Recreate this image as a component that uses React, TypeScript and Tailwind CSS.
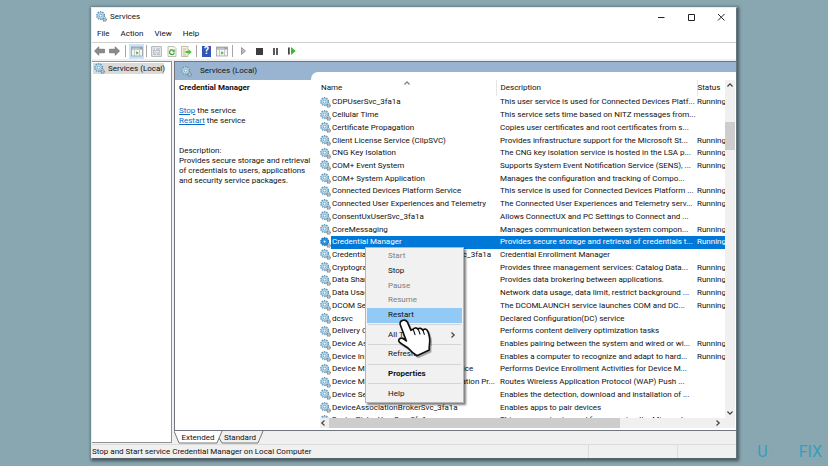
import type { ReactNode } from "react";

type Service = {
  name: string;
  description: string;
  running?: boolean;
  selected?: boolean;
};

const services: Service[] = [
  { name: "CDPUserSvc_3fa1a", description: "This user service is used for Connected Devices Platf...", running: true },
  { name: "Cellular Time", description: "This service sets time based on NITZ messages from..." },
  { name: "Certificate Propagation", description: "Copies user certificates and root certificates from s..." },
  { name: "Client License Service (ClipSVC)", description: "Provides infrastructure support for the Microsoft St...", running: true },
  { name: "CNG Key Isolation", description: "The CNG key isolation service is hosted in the LSA p...", running: true },
  { name: "COM+ Event System", description: "Supports System Event Notification Service (SENS), ...", running: true },
  { name: "COM+ System Application", description: "Manages the configuration and tracking of Compo..." },
  { name: "Connected Devices Platform Service", description: "This service is used for Connected Devices Platform ...", running: true },
  { name: "Connected User Experiences and Telemetry", description: "The Connected User Experiences and Telemetry serv...", running: true },
  { name: "ConsentUxUserSvc_3fa1a", description: "Allows ConnectUX and PC Settings to Connect and ..." },
  { name: "CoreMessaging", description: "Manages communication between system compon...", running: true },
  { name: "Credential Manager", description: "Provides secure storage and retrieval of credentials t...", running: true, selected: true },
  { name: "CredentialEnrollmentManagerUserSvc_3fa1a", description: "Credential Enrollment Manager" },
  { name: "Cryptographic Services", description: "Provides three management services: Catalog Data...", running: true },
  { name: "Data Sharing Service", description: "Provides data brokering between applications.", running: true },
  { name: "Data Usage", description: "Network data usage, data limit, restrict background ...", running: true },
  { name: "DCOM Server Process Launcher", description: "The DCOMLAUNCH service launches COM and DC...", running: true },
  { name: "dcsvc", description: "Declared Configuration(DC) service" },
  { name: "Delivery Optimization", description: "Performs content delivery optimization tasks" },
  { name: "Device Association Service", description: "Enables pairing between the system and wired or wi...", running: true },
  { name: "Device Install Service", description: "Enables a computer to recognize and adapt to hard...", running: true },
  { name: "Device Management Enrollment Service", description: "Performs Device Enrollment Activities for Device M..." },
  { name: "Device Management Wireless Application Pr...", description: "Routes Wireless Application Protocol (WAP) Push ..." },
  { name: "Device Setup Manager", description: "Enables the detection, download and installation of ..." },
  { name: "DeviceAssociationBrokerSvc_3fa1a", description: "Enables apps to pair devices" },
  { name: "DevicePickerUserSvc_3fa1a", description: "This user service is used for managing the Miracast..." },
];

type MenuEntry = { label: string; disabled?: boolean; active?: boolean; bold?: boolean; submenu?: boolean } | null;

const menuEntries: MenuEntry[] = [
  { label: "Start", disabled: true },
  { label: "Stop" },
  { label: "Pause", disabled: true },
  { label: "Resume", disabled: true },
  { label: "Restart", active: true },
  null,
  { label: "All Tasks", submenu: true },
  null,
  { label: "Refresh" },
  null,
  { label: "Properties", bold: true },
  null,
  { label: "Help" },
];

function GearIcon({ className = "h-[11px] w-[11px]", selected = false }: { className?: string; selected?: boolean }) {
  const stroke = selected ? "#1673bd" : "#5f97b8";
  const fill = selected ? "#3c9be6" : "#cfe7f4";
  return (
    <svg viewBox="0 0 20 20" className={`shrink-0 ${className}`} aria-hidden="true">
      <circle cx="15.6" cy="15.4" r="3.2" fill="#b9c5cd" stroke="#6d808d" strokeWidth="2" strokeDasharray="1.8 1" />
      <circle cx="8.4" cy="8.4" r="7" fill={fill} stroke={stroke} strokeWidth="2.4" strokeDasharray="2.6 1.8" />
      <circle cx="8.4" cy="8.4" r="5.6" fill={fill} stroke={stroke} strokeWidth="1" />
      <circle cx="8.4" cy="8.4" r="2.6" fill="#fff" stroke={stroke} strokeWidth="1.5" />
    </svg>
  );
}

function ToolButton({ label, active, children }: { label: string; active?: boolean; children: ReactNode }) {
  return (
    <button
      type="button"
      aria-label={label}
      className={`flex h-[15px] w-[15px] items-center justify-center ${active ? "bg-[#cce4f7]" : ""}`}
    >
      {children}
    </button>
  );
}

function Separator({ className }: { className: string }) {
  return (
    <div className={`flex h-3 justify-center ${className}`}>
      <div className="w-px bg-[#a6a6a6]" />
    </div>
  );
}

function ArrowIcon({ flip }: { flip?: boolean }) {
  return (
    <svg viewBox="0 0 22 20" className={`h-[10px] w-[11px] ${flip ? "-scale-x-100" : ""}`}>
      <path d="M1 10 9.5 1.5V6.5H21V13.5H9.5V18.5Z" fill="#8b8b8b" stroke="#6c6c6c" strokeWidth="1.4" />
    </svg>
  );
}

function PaneIcon() {
  return (
    <svg viewBox="0 0 24 22" className="h-[11px] w-3">
      <rect x="1" y="2" width="22" height="18" fill="#f4f4f4" stroke="#8e959b" strokeWidth="1.4" />
      <path d="M1 2H23V7H1Z" fill="#9aa2a9" />
      <path d="M3 4.5H17" stroke="#fff" strokeWidth="1" />
      <path d="M7 7V20M17 7V20" stroke="#a5acb2" strokeWidth="1.2" />
      <path d="M10.5 10.5 15.5 13.8 10.5 17Z" fill="#39a935" />
    </svg>
  );
}

function Toolbar() {
  return (
    <div className="flex h-[17px] shrink-0 items-center border-t border-[#cfcfcf] bg-white">
      <ToolButton label="Back"><ArrowIcon /></ToolButton>
      <ToolButton label="Forward"><ArrowIcon flip /></ToolButton>
      <Separator className="w-[7px]" />
      <ToolButton label="Show console tree" active><PaneIcon /></ToolButton>
      <Separator className="w-[5px]" />
      <ToolButton label="Properties">
        <svg viewBox="0 0 22 22" className="h-[11px] w-[11px]">
          <rect x="1.5" y="1.5" width="19" height="19" fill="#f3f3f3" stroke="#949ba1" strokeWidth="1.6" />
          <path d="M4.5 6H8M10 6H18M4.5 16.5H10M12 16.5H18" stroke="#8e969c" strokeWidth="1.6" />
          <rect x="5" y="8.5" width="12" height="5.5" fill="#dfe5e9" stroke="#9aa2a9" />
        </svg>
      </ToolButton>
      <ToolButton label="Refresh">
        <svg viewBox="0 0 20 22" className="h-[11px] w-[10px]">
          <path d="M2 1H14L18 5V21H2Z" fill="#f7f7ef" stroke="#a3a795" strokeWidth="1.4" />
          <path d="M14.5 13A4.7 4.7 0 1 1 12.5 8.5" fill="none" stroke="#35a234" strokeWidth="2.4" />
          <path d="M10.5 11.5 16 11.5 14.5 6Z" fill="#35a234" />
        </svg>
      </ToolButton>
      <ToolButton label="Export list">
        <svg viewBox="0 0 22 22" className="h-[11px] w-[11px]">
          <path d="M1 1H14V21H1Z" fill="#f8f6df" stroke="#a9a68c" strokeWidth="1.4" />
          <path d="M3.5 6H11M3.5 10H9M3.5 14H9M3.5 18H11" stroke="#8f9277" strokeWidth="1.2" />
          <path d="M9 10H15V6.5L21.5 12 15 17.5V14H9Z" fill="#4cc23a" />
        </svg>
      </ToolButton>
      <Separator className="w-[5px]" />
      <ToolButton label="Help">
        <span className="flex h-[11px] w-[9px] items-center justify-center bg-[#3355b5] text-[10px] leading-none font-bold text-white">
          ?
        </span>
      </ToolButton>
      <ToolButton label="Show action pane"><PaneIcon /></ToolButton>
      <Separator className="w-[7px]" />
      <div className="flex gap-px">
        <ToolButton label="Start service">
          <svg viewBox="0 0 10 16" className="h-2 w-[5px]">
            <path d="M1 1 9 8 1 15Z" fill="#b9bcbf" stroke="#85898c" strokeWidth="1.6" />
          </svg>
        </ToolButton>
        <ToolButton label="Stop service"><span className="h-[7px] w-[7px] bg-[#3c3c3c]" /></ToolButton>
        <ToolButton label="Pause service"><span className="h-[7px] w-[5px] border-x-2 border-[#5a5a5a]" /></ToolButton>
        <ToolButton label="Restart service">
          <svg viewBox="0 0 16 16" className="h-2 w-2">
            <path d="M0 1H3.5V15H0Z" fill="#454545" />
            <path d="M6 0 15.5 8 6 16Z" fill="#3dbb2e" />
          </svg>
        </ToolButton>
      </div>
    </div>
  );
}

function Chevron({ className = "" }: { className?: string }) {
  return (
    <svg viewBox="0 0 10 10" className={`h-[6px] w-[6px] shrink-0 ${className}`} aria-hidden="true">
      <path d="M2.5 0.8 7 5 2.5 9.2" fill="none" stroke="#444" strokeWidth="2" />
    </svg>
  );
}

const handPath =
  "M20 7C13 9 11 15 13 21L31 69C25 62 16 57 10 63C6 68 9 73 15 76L36 90C44 99 53 107 63 113L100 96C98 85 103 75 101 61C99 49 97 37 90 34C86 32 82 34 81 37C77 30 69 29 66 34C62 28 54 29 51 34L45 37L34 12C31 7 26 5 20 7Z";

function HandCursor({ className }: { className: string }) {
  return (
    <svg viewBox="0 0 111 126" className={className} aria-hidden="true">
      <path d={handPath} transform="translate(4 5)" fill="#000" stroke="#000" strokeWidth="5" opacity="0.3" />
      <path d={handPath} fill="#fff" stroke="#111" strokeWidth="5" strokeLinejoin="round" />
      <path d="M52 35 57 50M67 34 72 48M81 37 85 49" stroke="#111" strokeWidth="3.4" strokeLinecap="round" />
    </svg>
  );
}

function ContextMenu() {
  return (
    <div
      role="menu"
      className="absolute top-[167px] left-[45px] flex h-[156px] w-[99px] flex-col border border-[#b5b5b5] bg-[#f1f1f1] p-px shadow-[2px_2px_2px_rgba(0,0,0,0.5)]"
    >
      {menuEntries.map((entry, i) =>
        entry ? (
          <button
            key={entry.label}
            type="button"
            role="menuitem"
            disabled={entry.disabled}
            className={`flex min-h-0 grow-[15] basis-0 items-center justify-between pr-[6px] pl-[21px] text-left leading-none ${
              entry.active ? "bg-[#91c9f7]" : ""
            } ${entry.disabled ? "text-[#7d7d7d]" : ""} ${entry.bold ? "font-bold" : ""}`}
          >
            {entry.label}
            {entry.submenu && <Chevron />}
          </button>
        ) : (
          <div key={i} role="separator" className="flex min-h-0 grow-[5] basis-0 items-center px-px">
            <div className="h-px w-full bg-[#d4d4d4]" />
          </div>
        ),
      )}
    </div>
  );
}

function ServiceTable() {
  return (
    <table className="h-[347px] w-full table-fixed border-collapse text-left leading-3 whitespace-nowrap">
      <colgroup>
        <col className="w-[11px]" />
        <col className="w-[165px]" />
        <col />
        <col className="w-7" />
      </colgroup>
      <thead>
        <tr className="h-4">
          <th colSpan={2} className="relative border-r border-[#e5e5e5] p-0 pl-px font-normal">
            Name
            <Chevron className="absolute top-0 left-[84px] -rotate-90 opacity-70" />
          </th>
          <th className="border-r border-[#e5e5e5] p-0 pl-1 font-normal">Description</th>
          <th className="p-0 font-normal">Status</th>
        </tr>
      </thead>
      <tbody>
        {services.map((s) => {
          const cell = s.selected ? "overflow-hidden bg-[#0078d7] p-0 text-white" : "overflow-hidden p-0";
          return (
            <tr key={s.name}>
              <td className="p-0">
                <GearIcon selected={s.selected} />
              </td>
              <td className={`${cell} pl-px`}>{s.name}</td>
              <td className={`${cell} pl-1`}>{s.description}</td>
              <td className={cell}>{s.running ? "Running" : ""}</td>
            </tr>
          );
        })}
      </tbody>
    </table>
  );
}

function ServiceList() {
  return (
    <div className="mt-[10px] flex min-w-0 flex-1 rounded-tl-[7px] bg-white pt-2 pr-px pb-[2px] pl-[9px]">
      <div className="relative flex min-w-0 flex-1 flex-col">
        <div className="flex min-h-0 flex-1">
          <div className="min-w-0 flex-1 overflow-hidden">
            <ServiceTable />
          </div>
          <div className="flex w-[10px] shrink-0 flex-col items-center bg-[#f0f0f0] py-[2px]">
            <Chevron className="-rotate-90" />
            <div className="flex w-full flex-1 flex-col pt-[34px]">
              <div className="h-7 bg-[#cdcdcd]" />
            </div>
            <Chevron className="rotate-90" />
          </div>
        </div>
        <div className="flex h-[10px] shrink-0 items-center bg-[#f0f0f0] pr-[14px]">
          <Chevron className="mr-[3px] rotate-180" />
          <div className="h-full flex-1">
            <div className="h-full w-[77%] bg-[#cdcdcd]" />
          </div>
          <Chevron className="ml-2" />
        </div>
        <ContextMenu />
        <HandCursor className="absolute top-[238px] left-[76px] h-[42px] w-[37px]" />
      </div>
    </div>
  );
}

function DetailPane() {
  return (
    <div className="flex w-[136px] shrink-0 flex-col">
      <div className="flex h-[18px] items-center gap-2 pl-[6px]">
        <GearIcon />
        <span>Services (Local)</span>
      </div>
      <div className="flex flex-1 flex-col bg-white pt-[3px] pl-1 leading-[10px]">
        <h1 className="font-bold">Credential Manager</h1>
        <p className="mt-[13px]">
          <a href="#stop" className="text-[#0a6cc4] underline">Stop</a> the service
          <br />
          <a href="#restart" className="text-[#0a6cc4] underline">Restart</a> the service
        </p>
        <p className="mt-5 whitespace-nowrap">
          Description:
          <br />
          Provides secure storage and retrieval
          <br />
          of credentials to users, applications
          <br />
          and security service packages.
        </p>
      </div>
    </div>
  );
}

function ViewTabs() {
  return (
    <div className="flex h-[13px] shrink-0 items-center bg-[#f0f0f0]">
      <div className="relative flex h-full items-center">
        <svg viewBox="0 0 90 13" className="absolute inset-0 h-full w-[90px]" aria-hidden="true">
          <path d="M0 0 5 12H43L48 0Z" fill="#fff" />
          <path d="M0 0 5 12H43L48 0M45 7 48 12H84L89 0" fill="none" stroke="#777" />
        </svg>
        <button type="button" className="relative w-12 text-center">Extended</button>
        <button type="button" className="relative w-9 text-center">Standard</button>
      </div>
    </div>
  );
}

export default function App() {
  return (
    <div className="relative h-screen bg-[#88a7b0] px-[91px] py-[7px] font-['Roboto','Noto_Sans',sans-serif] text-[8px] leading-[10px] text-[#111]">
      <div className="flex h-full flex-col border border-[#e8eef0] border-r-[#66757b] border-b-[#56646a] bg-[#f0f0f0] shadow-[1px_1px_3px_1px_rgba(30,45,52,0.65)]">
        <header className="flex h-[17px] shrink-0 items-center bg-white pl-1">
          <GearIcon />
          <span className="ml-[3px]">Services</span>
          <div className="ml-auto flex">
            <button type="button" aria-label="Minimize" className="flex w-[30px] justify-center">
              <svg viewBox="0 0 8 8" className="h-2 w-2"><path d="M1 4.5H7.5" stroke="#222" /></svg>
            </button>
            <button type="button" aria-label="Maximize" className="flex w-[30px] justify-center">
              <svg viewBox="0 0 8 8" className="h-2 w-2"><path d="M1.5 1.5H7.5V7.5H1.5Z" fill="none" stroke="#222" /></svg>
            </button>
            <button type="button" aria-label="Close" className="flex w-[30px] justify-center">
              <svg viewBox="0 0 8 8" className="h-2 w-2"><path d="M1 1 7.5 7.5M7.5 1 1 7.5" stroke="#222" /></svg>
            </button>
          </div>
        </header>
        <nav className="flex h-[17px] shrink-0 items-center gap-[11px] bg-white pl-[5px]">
          <button type="button">File</button>
          <button type="button">Action</button>
          <button type="button">View</button>
          <button type="button">Help</button>
        </nav>
        <Toolbar />

        <main className="mt-[2px] flex min-h-0 flex-1">
          <aside className="mb-px w-20 shrink-0 border-t border-r border-b border-[#8d9297] bg-white pt-px pl-px">
            <div className="flex h-[11px] w-[71px] items-center gap-[3px] bg-[#dadada] pl-px">
              <GearIcon />
              <span className="whitespace-nowrap">Services (Local)</span>
            </div>
          </aside>
          <section className="ml-[2px] flex min-w-0 flex-1 flex-col">
            <div className="flex min-h-0 flex-1 border-t border-b border-l border-[#70767c] bg-[#99b4d1]">
              <DetailPane />
              <ServiceList />
            </div>
            <ViewTabs />
          </section>
        </main>

        <footer className="flex h-[14px] shrink-0 items-center border-t border-[#dcdcdc]">
          <span className="flex-1 whitespace-nowrap">Stop and Start service Credential Manager on Local Computer</span>
          <span className="h-full w-[89px] border-l border-[#dcdcdc]" />
          <span className="h-full w-[59px] border-l border-[#dcdcdc]" />
        </footer>
      </div>

      <div className="absolute right-[6px] bottom-1 flex text-[16px] leading-5 text-[#379ebd]">
        U<span className="w-[31px] text-center text-[14px] text-[#8ca5ae]">GET</span>FIX
      </div>
    </div>
  );
}
